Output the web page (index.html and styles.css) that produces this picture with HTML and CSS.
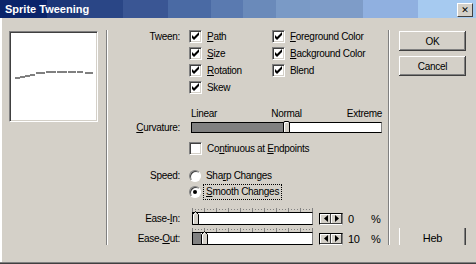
FILE: index.html
```html
<!DOCTYPE html>
<html lang="en">
<head>
  <meta charset="UTF-8">
  <title>Sprite Tweening</title>
  <link rel="stylesheet" href="styles.css">
</head>
<body>
  <div class="window">
    <div class="titlebar">
      <span class="title">Sprite Tweening</span>
      <span class="close-btn"><span class="close-x">✕</span></span>
    </div>

    <div class="dialog">
      <!-- preview of the curve -->
      <div class="preview-col">
        <div class="preview">
          <svg width="85" height="87" viewBox="0 0 85 87">
            <g fill="#808080">
              <rect x="4" y="44" width="5" height="2"/>
              <rect x="9" y="43" width="5" height="2"/>
              <rect x="14" y="42" width="5" height="2"/>
              <rect x="19" y="41" width="5" height="2"/>
              <rect x="25" y="39" width="9" height="2"/>
              <rect x="35" y="38" width="10" height="2"/>
              <rect x="46" y="38" width="10" height="2"/>
              <rect x="57" y="38" width="8" height="2"/>
              <rect x="66" y="38" width="6" height="2"/>
              <rect x="74" y="39" width="8" height="2"/>
            </g>
          </svg>
        </div>
      </div>

      <div class="sep"></div>

      <div class="main">
        <div class="tween-grid">
          <span class="lbl">Tween:</span>
          <label class="check"><span class="box on"></span><span><u>P</u>ath</span></label>
          <label class="check"><span class="box on"></span><span><u>F</u>oreground Color</span></label>
          <span></span>
          <label class="check"><span class="box on"></span><span><u>S</u>ize</span></label>
          <label class="check"><span class="box on"></span><span><u>B</u>ackground Color</span></label>
          <span></span>
          <label class="check"><span class="box on"></span><span><u>R</u>otation</span></label>
          <label class="check"><span class="box on"></span><span>Blend</span></label>
          <span></span>
          <label class="check"><span class="box on"></span><span>Skew</span></label>
        </div>

        <div class="scale">
          <span>Linear</span>
          <span>Normal</span>
          <span class="scale-end">Extreme</span>
        </div>
        <div class="row curve-row">
          <span class="lbl"><u>C</u>urvature:</span>
          <div class="track curve-track">
            <span class="fill" style="width: 91px"></span>
            <span class="knob"></span>
          </div>
        </div>

        <div class="row check-row">
          <span class="lbl"></span>
          <label class="check"><span class="box"></span><span>Co<u>n</u>tinuous at <u>E</u>ndpoints</span></label>
        </div>

        <div class="speed">
          <div class="row radio-row">
            <span class="lbl">Speed:</span>
            <label class="radio"><span class="dot"></span><span>Sha<u>r</u>p Changes</span></label>
          </div>
          <div class="row radio-row">
            <span class="lbl"></span>
            <label class="radio"><span class="dot on"></span><span class="focus"><u>S</u>mooth Changes</span></label>
          </div>
        </div>

        <div class="ease ease-in">
          <div class="ticks"></div>
          <div class="row ease-row">
            <span class="lbl">Ease-<u>I</u>n:</span>
            <div class="track ease-track">
              <svg class="pointer" width="7" height="14" viewBox="0 0 7 14"><path d="M0.5 13.5V3.5L3.5 0.5 6.5 3.5V13.5z" fill="#d4d0c8" stroke="#000"/><path d="M1.5 12.5V4L3.5 2" fill="none" stroke="#fff"/></svg>
            </div>
            <span class="spin">
              <span class="arrow"><svg width="4" height="7" viewBox="0 0 4 7"><path d="M4 0v7L0 3.5z" fill="#000"/></svg></span>
              <span class="arrow"><svg width="4" height="7" viewBox="0 0 4 7"><path d="M0 0v7l4-3.5z" fill="#000"/></svg></span>
            </span>
            <span class="value">0</span>
            <span class="pct">%</span>
          </div>
        </div>

        <div class="ease ease-out">
          <div class="ticks"></div>
          <div class="row ease-row">
            <span class="lbl">Ease-<u>O</u>ut:</span>
            <div class="track ease-track">
              <span class="fill" style="width: 8px"></span>
              <svg class="pointer" width="7" height="14" viewBox="0 0 7 14"><path d="M0.5 13.5V3.5L3.5 0.5 6.5 3.5V13.5z" fill="#d4d0c8" stroke="#000"/><path d="M1.5 12.5V4L3.5 2" fill="none" stroke="#fff"/></svg>
            </div>
            <span class="spin">
              <span class="arrow"><svg width="4" height="7" viewBox="0 0 4 7"><path d="M4 0v7L0 3.5z" fill="#000"/></svg></span>
              <span class="arrow"><svg width="4" height="7" viewBox="0 0 4 7"><path d="M0 0v7l4-3.5z" fill="#000"/></svg></span>
            </span>
            <span class="value">10</span>
            <span class="pct">%</span>
          </div>
        </div>
      </div>

      <div class="sep"></div>

      <div class="actions">
        <button class="btn">OK</button>
        <button class="btn">Cancel</button>
        <button class="btn btn-help">Heb</button>
      </div>
    </div>
  </div>
</body>
</html>
```

FILE: styles.css
```css
body {
  margin: 0;
  background-color: #d4d0c8;
  font-family: "Liberation Sans", Arial, sans-serif;
  font-size: 10px;
  line-height: 12px;
  letter-spacing: -0.3px;
  color: #000;
}

.window {
  width: 476px;
  height: 264px;
  box-sizing: border-box;
  background-color: #d4d0c8;
  box-shadow: inset 0 -1px #404040, inset 0 -2px #808080, inset 2px 0 #fff, inset 1px 0 #d4d0c8;
}

u {
  text-decoration: underline;
  text-underline-offset: 1px;
}

/* title bar */
.titlebar {
  height: 18px;
  display: grid;
  grid-template-columns: 1fr 16px;
  align-items: center;
  padding: 0 3px 0 5px;
  background: linear-gradient(90deg,
    #0a246a 0 47px, #1c3678 47px 80px, #2a4686 80px 123px, #3a5694 123px 168px,
    #4a6aa4 168px 211px, #5a7ab0 211px 243px, #6a8aba 243px 276px, #7a9ac6 276px 310px,
    #7e9cc8 310px 363px, #90b0e0 363px 418px, #a6caf0 418px);
}

.title {
  color: #fff;
  font-weight: bold;
  font-size: 11px;
  letter-spacing: 0;
}

.close-btn {
  height: 14px;
  box-sizing: border-box;
  margin-top: 1px;
  background-color: #d4d0c8;
  border: 1px solid;
  border-color: #fff #404040 #404040 #fff;
  text-align: center;
}

.close-x {
  font-family: "DejaVu Sans", sans-serif;
  font-weight: bold;
  font-size: 9px;
  line-height: 12px;
  letter-spacing: 0;
  color: #000;
}

/* dialog body */
.dialog {
  display: flex;
  height: 227px;
  padding-top: 12px;
  box-sizing: border-box;
  overflow: hidden;
}

.preview-col {
  width: 106px;
  padding-left: 9px;
  box-sizing: border-box;
}

.preview {
  width: 89px;
  height: 91px;
  margin-top: 1px;
  box-sizing: border-box;
  background: #fff;
  border: 1px solid;
  border-color: #808080 #fff #fff #808080;
  box-shadow: inset 1px 1px #404040, inset -1px -1px #d4d0c8;
  padding: 1px;
}

.preview svg {
  display: block;
}

.sep {
  width: 1px;
  height: 215px;
  border-left: 1px solid #808080;
  background: #fff;
}

.main {
  width: 280px;
}

.lbl {
  width: 72px;
  margin-right: 9px;
  text-align: right;
  flex-shrink: 0;
}

.row {
  display: flex;
  align-items: center;
}

/* tween checkboxes */
.tween-grid {
  display: grid;
  grid-template-columns: 72px 74px auto;
  grid-auto-rows: 17px;
  column-gap: 9px;
  align-items: center;
  margin-top: -2px;
}

.tween-grid .lbl {
  margin-right: 0;
}

.check, .radio {
  display: flex;
  align-items: center;
  white-space: nowrap;
}

.box {
  width: 13px;
  height: 13px;
  box-sizing: border-box;
  margin-right: 5px;
  background: #fff;
  border: 1px solid;
  border-color: #808080 #fff #fff #808080;
  box-shadow: inset 1px 1px #404040, inset -1px -1px #d4d0c8;
  flex-shrink: 0;
}

.box.on {
  background: #fff url("data:image/svg+xml,%3Csvg xmlns='http://www.w3.org/2000/svg' width='11' height='11'%3E%3Cpath d='M2 4v3l2 2 5-5V1L4 6z' fill='%23000'/%3E%3C/svg%3E") no-repeat 0 0;
}

/* curvature slider */
.scale {
  display: grid;
  grid-template-columns: 1fr auto 1fr;
  width: 191px;
  margin: 12px 0 0 83px;
}

.scale-end {
  justify-self: end;
}

.curve-row {
  margin-top: 2px;
  height: 11px;
}

.track {
  display: flex;
  box-sizing: border-box;
  background: #fff;
  border: 1px solid #000;
  border-right-color: #808080;
}

.curve-track {
  width: 191px;
  height: 11px;
  margin-left: 2px;
}

.fill {
  background: #808080;
  height: 100%;
}

.knob {
  width: 7px;
  height: 12px;
  margin-top: -2px;
  box-sizing: border-box;
  background: #d4d0c8;
  border: 1px solid #000;
  border-top-left-radius: 2px;
  border-top-right-radius: 2px;
  box-shadow: inset 1px 1px #fff;
}

.check-row {
  margin-top: 7px;
  height: 17px;
}

/* speed radios */
.speed {
  margin-top: 11px;
}

.radio-row {
  height: 16px;
}

.dot {
  width: 12px;
  height: 12px;
  box-sizing: border-box;
  margin-right: 2px;
  border-radius: 50%;
  background: #fff;
  border: 1px solid;
  border-color: #808080 #fff #fff #808080;
  box-shadow: inset 1px 1px #404040;
  display: flex;
  align-items: center;
  justify-content: center;
  flex-shrink: 0;
}

.dot.on::after {
  content: "";
  width: 4px;
  height: 4px;
  border-radius: 50%;
  background: #000;
}

.radio .dot + span {
  padding: 1px 2px;
  margin-left: 1px;
}

.focus {
  outline: 1px dotted #000;
}

/* ease sliders */
.ease-in {
  margin-top: 8px;
}

.ease-out {
  margin-top: 3px;
}

.ticks {
  width: 121px;
  height: 4px;
  margin-left: 84px;
  background:
    repeating-linear-gradient(90deg, #808080 0 1px, transparent 1px 12px) 0 0 / 100% 4px no-repeat,
    repeating-linear-gradient(90deg, #808080 0 1px, transparent 1px 3px) 0 1px / 100% 1px no-repeat;
}

.ease-row {
  height: 13px;
}

.ease-track {
  width: 121px;
  height: 13px;
  margin-left: 3px;
  overflow: visible;
}

.pointer {
  display: block;
  margin-top: -2px;
  flex-shrink: 0;
}

.ease-track .pointer:first-child {
  margin-left: -1px;
}

.spin {
  display: flex;
  margin-left: 6px;
  border: 1px solid #000;
  border-right-color: #808080;
  border-bottom-color: #fff;
}

.arrow {
  width: 11px;
  height: 10px;
  display: flex;
  align-items: center;
  justify-content: center;
  background: #d4d0c8;
  box-shadow: inset -1px -1px #404040, inset 1px 1px #fff;
}

.value {
  width: 23px;
  margin-left: 5px;
  font-size: 11px;
}

.pct {
  font-size: 11px;
}

/* buttons column */
.actions {
  width: 86px;
  padding-left: 9px;
  box-sizing: border-box;
  display: flex;
  flex-direction: column;
}

.btn {
  width: 67px;
  height: 20px;
  margin: 1px 0 5px;
  padding: 0;
  border: none;
  background: #d4d0c8;
  font-family: "Liberation Sans", Arial, sans-serif;
  font-size: 10px;
  letter-spacing: -0.3px;
  color: #000;
  box-shadow: inset -1px -1px #404040, inset 1px 1px #fff, inset -2px -2px #808080;
}

.btn + .btn {
  margin-top: 0;
}

.btn-help {
  margin-top: auto !important;
  margin-bottom: -3px;
  font-size: 11px;
  box-shadow: inset 1px 0 #fff, inset -1px 0 #404040, inset -2px 0 #808080;
}
```
